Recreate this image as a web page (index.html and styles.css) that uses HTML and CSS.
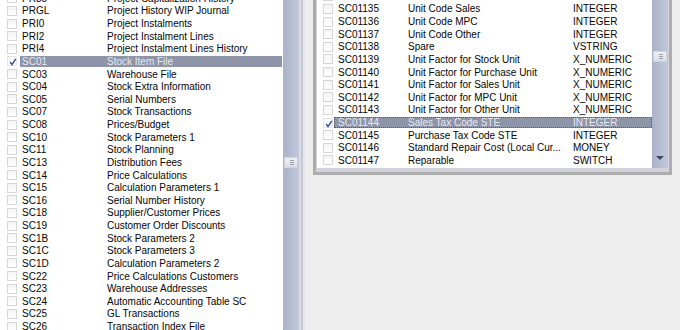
FILE: index.html
```html
<!DOCTYPE html>
<html lang="en">
<head>
  <meta charset="UTF-8">
  <title>Tables and fields</title>
  <link rel="stylesheet" href="styles.css">
</head>
<body>
  <div class="layout">

    <!-- left: tables -->
    <div class="pane-left">
      <ul class="list list-tables">
        <li class="row"><span class="box"></span><span class="cells"><span>PR35</span><span>Project Capitalization History</span></span></li>
        <li class="row"><span class="box"></span><span class="cells"><span>PRGL</span><span>Project History WIP Journal</span></span></li>
        <li class="row"><span class="box"></span><span class="cells"><span>PRI0</span><span>Project Instalments</span></span></li>
        <li class="row"><span class="box"></span><span class="cells"><span>PRI2</span><span>Project Instalment Lines</span></span></li>
        <li class="row"><span class="box"></span><span class="cells"><span>PRI4</span><span>Project Instalment Lines History</span></span></li>
        <li class="row sel"><span class="box checked"><svg viewBox="0 0 10 10"><polyline points="2.2,5 4,7.6 7.8,1.8"/></svg></span><span class="cells"><span>SC01</span><span>Stock Item File</span></span></li>
        <li class="row"><span class="box"></span><span class="cells"><span>SC03</span><span>Warehouse File</span></span></li>
        <li class="row"><span class="box"></span><span class="cells"><span>SC04</span><span>Stock Extra Information</span></span></li>
        <li class="row"><span class="box"></span><span class="cells"><span>SC05</span><span>Serial Numbers</span></span></li>
        <li class="row"><span class="box"></span><span class="cells"><span>SC07</span><span>Stock Transactions</span></span></li>
        <li class="row"><span class="box"></span><span class="cells"><span>SC08</span><span>Prices/Budget</span></span></li>
        <li class="row"><span class="box"></span><span class="cells"><span>SC10</span><span>Stock Parameters 1</span></span></li>
        <li class="row"><span class="box"></span><span class="cells"><span>SC11</span><span>Stock Planning</span></span></li>
        <li class="row"><span class="box"></span><span class="cells"><span>SC13</span><span>Distribution Fees</span></span></li>
        <li class="row"><span class="box"></span><span class="cells"><span>SC14</span><span>Price Calculations</span></span></li>
        <li class="row"><span class="box"></span><span class="cells"><span>SC15</span><span>Calculation Parameters 1</span></span></li>
        <li class="row"><span class="box"></span><span class="cells"><span>SC16</span><span>Serial Number History</span></span></li>
        <li class="row"><span class="box"></span><span class="cells"><span>SC18</span><span>Supplier/Customer Prices</span></span></li>
        <li class="row"><span class="box"></span><span class="cells"><span>SC19</span><span>Customer Order Discounts</span></span></li>
        <li class="row"><span class="box"></span><span class="cells"><span>SC1B</span><span>Stock Parameters 2</span></span></li>
        <li class="row"><span class="box"></span><span class="cells"><span>SC1C</span><span>Stock Parameters 3</span></span></li>
        <li class="row"><span class="box"></span><span class="cells"><span>SC1D</span><span>Calculation Parameters 2</span></span></li>
        <li class="row"><span class="box"></span><span class="cells"><span>SC22</span><span>Price Calculations Customers</span></span></li>
        <li class="row"><span class="box"></span><span class="cells"><span>SC23</span><span>Warehouse Addresses</span></span></li>
        <li class="row"><span class="box"></span><span class="cells"><span>SC24</span><span>Automatic Accounting Table SC</span></span></li>
        <li class="row"><span class="box"></span><span class="cells"><span>SC25</span><span>GL Transactions</span></span></li>
        <li class="row"><span class="box"></span><span class="cells"><span>SC26</span><span>Transaction Index File</span></span></li>
      </ul>
    </div>
    <div class="scrollbar">
      <div class="thumb thumb-left"></div>
    </div>

    <!-- splitter -->
    <div class="splitter"></div>

    <!-- right: fields -->
    <div class="pane-right">
      <div class="frame">
        <div class="listbox">
          <ul class="list list-fields">
            <li class="row"><span class="box"></span><span class="cells"><span>SC01134</span><span>Unit Code Purchase</span><span>INTEGER</span></span></li>
            <li class="row"><span class="box"></span><span class="cells"><span>SC01135</span><span>Unit Code Sales</span><span>INTEGER</span></span></li>
            <li class="row"><span class="box"></span><span class="cells"><span>SC01136</span><span>Unit Code MPC</span><span>INTEGER</span></span></li>
            <li class="row"><span class="box"></span><span class="cells"><span>SC01137</span><span>Unit Code Other</span><span>INTEGER</span></span></li>
            <li class="row"><span class="box"></span><span class="cells"><span>SC01138</span><span>Spare</span><span>VSTRING</span></span></li>
            <li class="row"><span class="box"></span><span class="cells"><span>SC01139</span><span>Unit Factor for Stock Unit</span><span>X_NUMERIC</span></span></li>
            <li class="row"><span class="box"></span><span class="cells"><span>SC01140</span><span>Unit Factor for Purchase Unit</span><span>X_NUMERIC</span></span></li>
            <li class="row"><span class="box"></span><span class="cells"><span>SC01141</span><span>Unit Factor for Sales Unit</span><span>X_NUMERIC</span></span></li>
            <li class="row"><span class="box"></span><span class="cells"><span>SC01142</span><span>Unit Factor for MPC Unit</span><span>X_NUMERIC</span></span></li>
            <li class="row"><span class="box"></span><span class="cells"><span>SC01143</span><span>Unit Factor for Other Unit</span><span>X_NUMERIC</span></span></li>
            <li class="row sel focus"><span class="box checked"><svg viewBox="0 0 10 10"><polyline points="2.2,5 4,7.6 7.8,1.8"/></svg></span><span class="cells"><span>SC01144</span><span>Sales Tax Code STE</span><span>INTEGER</span></span></li>
            <li class="row"><span class="box"></span><span class="cells"><span>SC01145</span><span>Purchase Tax Code STE</span><span>INTEGER</span></span></li>
            <li class="row"><span class="box"></span><span class="cells"><span>SC01146</span><span>Standard Repair Cost (Local Cur...</span><span>MONEY</span></span></li>
            <li class="row"><span class="box"></span><span class="cells"><span>SC01147</span><span>Reparable</span><span>SWITCH</span></span></li>
            <li class="row"><span class="box"></span><span class="cells"><span>SC01148</span><span>Repair Days</span><span>INTEGER</span></span></li>
          </ul>
          <div class="scrollbar">
            <div class="thumb thumb-right"></div>
            <div class="arrow-down"></div>
          </div>
        </div>
      </div>
    </div>

  </div>
</body>
</html>
```

FILE: styles.css
```css
/* ===== page ===== */
body {
  margin: 0;
  background: #eeeeee;
  font-family: "Liberation Sans", Arial, sans-serif;
  font-size: 10px;
  color: #050505;
  overflow: hidden;
}

.layout {
  display: flex;
  height: 330px;
}

/* ===== lists ===== */
.list {
  list-style: none;
  margin: 0;
  padding: 0;
}
.row {
  display: flex;
  align-items: center;
  height: 12.64px;
  white-space: nowrap;
}
.box {
  flex-shrink: 0;
  width: 10px;
  height: 10px;
  box-sizing: border-box;
  border: 1px solid #d6d6d6;
  background: linear-gradient(#f4f4f4, #fff);
  position: relative;
}
.box svg {
  position: absolute;
  left: 0;
  top: 0;
  width: 10px;
  height: 10px;
  fill: none;
  stroke: #2a46a8;
  stroke-width: 1.4;
}
.box.checked {
  border-color: #e6e6e6;
  background: #fff;
}
.cells {
  flex: 1;
  display: grid;
  height: 11px;
  line-height: 11px;
  box-sizing: border-box;
}
.row.sel .cells {
  background: #8f95a9;
  color: #e6e9f1;
}
.row.focus .cells {
  outline: 1px dotted #5e5a48;
  outline-offset: -1px;
}

/* left table list */
.pane-left {
  width: 283px;
  background: #fff;
  overflow: hidden;
}
.list-tables {
  margin-top: -8px;
}
.list-tables .box {
  margin: 0 3px 0 7px;
}
.list-tables .cells {
  grid-template-columns: 85px 1fr;
  padding-left: 2px;
  margin-right: 1px;
}

/* right field list */
.pane-right {
  flex: 1;
  padding: 0 8px;
}
.frame {
  margin-top: -14px;
  height: 189px;
  box-sizing: border-box;
  border: 3px solid #adadad;
}
.listbox {
  display: flex;
  height: 100%;
  box-sizing: border-box;
  border: 1px solid #d2d3dc;
  border-bottom-width: 4px;
  background: #fff;
}
.list-fields {
  flex: 1;
  overflow: hidden;
}
.list-fields .box {
  margin: 0 1px 0 6px;
}
.list-fields .cells {
  grid-template-columns: 70px 165px 1fr;
  padding-left: 4px;
}

/* ===== scrollbars ===== */
.scrollbar {
  flex-shrink: 0;
  width: 16px;
  display: flex;
  flex-direction: column;
  background: linear-gradient(to right, #aab2c9, #b9c0d5 60%, #c2c8da);
}
.thumb {
  height: 9px;
  margin: 0 1px;
  border: 1px solid #cfd2dc;
  background: linear-gradient(#f0f0f3, #dedfe6);
  position: relative;
}
.thumb::after {
  content: "";
  position: absolute;
  left: 5px;
  top: 2px;
  width: 4px;
  height: 5px;
  background: repeating-linear-gradient(#9a9fae 0 1px, transparent 1px 2px);
}
.thumb-left {
  margin-top: 157px;
}
.thumb-right {
  margin-top: 61px;
}
.arrow-down {
  margin-top: auto;
  height: 16px;
  display: flex;
  justify-content: center;
  padding-top: 4px;
  box-sizing: border-box;
}
.arrow-down::before {
  content: "";
  width: 0;
  height: 0;
  border-left: 4px solid transparent;
  border-right: 4px solid transparent;
  border-top: 4px solid #3f4860;
}

/* ===== splitter ===== */
.splitter {
  width: 6px;
  background: linear-gradient(to right,
    #dcdde4 0 2px, #c7c8d6 2px 4px, #e5e5eb 4px 6px);
}
```
